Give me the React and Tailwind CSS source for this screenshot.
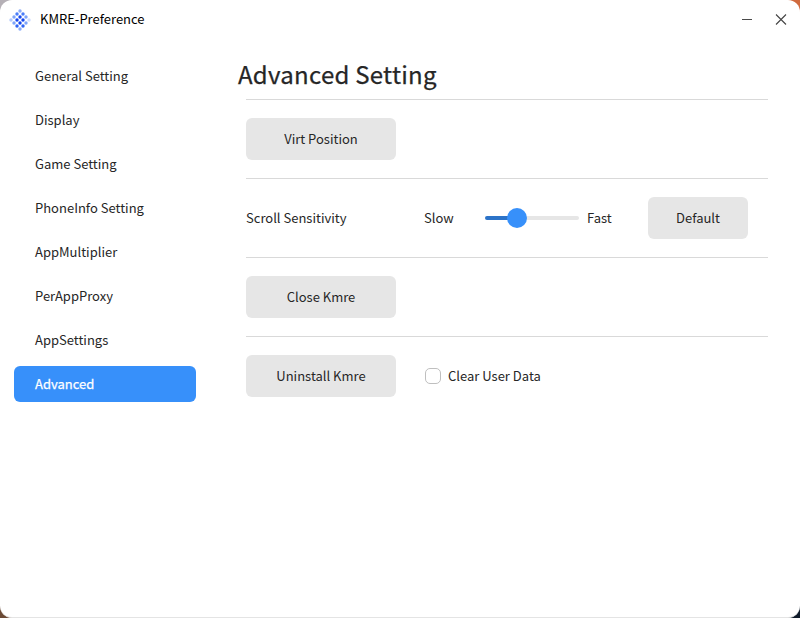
import React from "react";

const NAV = [
  "General Setting",
  "Display",
  "Game Setting",
  "PhoneInfo Setting",
  "AppMultiplier",
  "PerAppProxy",
  "AppSettings",
  "Advanced",
];

const DOTS = [
  [20, 11, "#8aabf8"],
  [17, 14, "#4a7df8"], [23, 14, "#4a7df8"],
  [14, 17, "#7da3f9"], [20, 17, "#1446f0"], [26, 17, "#7da3f9"],
  [11, 20, "#b3c9fc"], [17, 20, "#1446f0"], [23, 20, "#1446f0"], [29, 20, "#cddbfd"],
  [14, 23, "#7da3f9"], [20, 23, "#1446f0"], [26, 23, "#7da3f9"],
  [17, 26, "#3066f5"], [23, 26, "#3066f5"],
  [20, 29, "#8aabf8"],
];

function Logo() {
  return (
    <svg width="22" height="22" viewBox="9 9 22 22">
      {DOTS.map(([x, y, c]) => (
        <circle key={`${x}-${y}`} cx={x} cy={y} r="1.7" fill={c} />
      ))}
    </svg>
  );
}

function TitleBar() {
  return (
    <header className="flex h-10 items-center pl-[9px] pr-[13px] text-black">
      <Logo />
      <span className="ml-[9px] flex-1 pb-0.5 leading-5">KMRE-Preference</span>
      <svg width="12" height="12" viewBox="0 0 12 12" className="mr-[22px]" stroke="#4a4a4a">
        <path d="M1 5.5H11" />
      </svg>
      <svg width="12" height="12" viewBox="0 0 12 12" stroke="#444" strokeWidth="1.1">
        <path d="M1 0.5L11 10.5M11 0.5L1 10.5" />
      </svg>
    </header>
  );
}

function Button({ className, children }) {
  return (
    <button className={`h-[42px] rounded-md bg-[#e6e6e6] ${className}`}>{children}</button>
  );
}

function Row({ children }) {
  return (
    <div className="ml-2 flex h-[79px] items-center border-t border-[#d9d9d9]">{children}</div>
  );
}

export default function App() {
  return (
    <div className="h-[618px] w-[800px] bg-[linear-gradient(90deg,#b5b0b6_0%,#b5b0b6_50%,#d06a3e_50%,#d06a3e_100%)] font-['Noto_Sans_CJK_SC',sans-serif] text-[13px] text-[#262626]">
      <div className="h-full bg-[linear-gradient(90deg,#6b4a35_0%,#6b4a35_50%,#101c2b_50%,#101c2b_100%)] bg-[length:100%_50%] bg-bottom bg-no-repeat">
        <div className="flex h-full flex-col rounded-xl border-b border-[#e4e4e4] bg-white">
          <TitleBar />
          <div className="flex">
            <nav className="flex w-[210px] flex-col gap-2 px-[14px] pt-[18px]">
              {NAV.map((name) => (
                <div
                  key={name}
                  className={`flex h-9 items-center rounded-md pl-[21px] ${
                    name === "Advanced"
                      ? "bg-[#3790fa] text-white [-webkit-text-stroke:0.25px_white]"
                      : ""
                  }`}
                >
                  {name}
                </div>
              ))}
            </nav>
            <main className="ml-7 w-[530px] pt-[15px]">
              <h1 className="h-11 text-[24px] font-normal leading-[38px] tracking-[0.27px] [-webkit-text-stroke:0.25px_#262626]">
                Advanced Setting
              </h1>
              <Row>
                <Button className="w-[150px]">Virt Position</Button>
              </Row>
              <Row>
                <span className="w-[178px]">Scroll Sensitivity</span>
                <span className="w-[61px]">Slow</span>
                <div className="flex w-[94px] items-center">
                  <div className="h-1 w-6 rounded-l-full bg-[#2c73c8]" />
                  <div className="z-10 -ml-0.5 size-5 rounded-full bg-[#3790fa]" />
                  <div className="-ml-0.5 h-1 flex-1 rounded-r-full bg-[#e6e6e6]" />
                </div>
                <span className="ml-2 w-[61px]">Fast</span>
                <Button className="w-[100px]">Default</Button>
              </Row>
              <Row>
                <Button className="w-[150px]">Close Kmre</Button>
              </Row>
              <Row>
                <Button className="w-[150px]">Uninstall Kmre</Button>
                <span className="ml-[29px] size-4 rounded-[5px] border border-[#bfbfbf] bg-white" />
                <span className="ml-[7px]">Clear User Data</span>
              </Row>
            </main>
          </div>
        </div>
      </div>
    </div>
  );
}
